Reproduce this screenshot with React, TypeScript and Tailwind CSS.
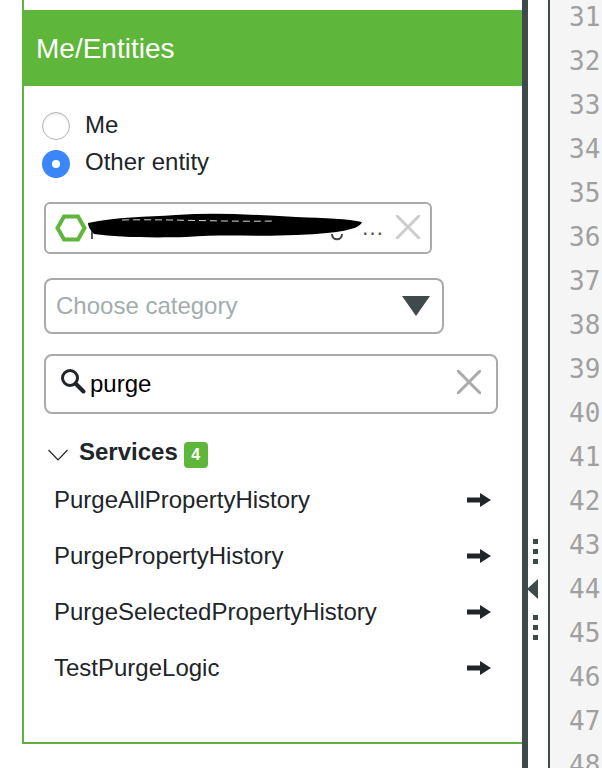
import React from "react";

const lines = [31,32,33,34,35,36,37,38,39,40,41,42,43,44,45,46,47,48];
const services = ["PurgeAllPropertyHistory","PurgePropertyHistory","PurgeSelectedPropertyHistory","TestPurgeLogic"];

function X({ size, color, w }: { size: number; color: string; w: number }) {
  return (
    <svg width={size} height={size} viewBox="0 0 24 24" className="shrink-0">
      <path d="M1 1L23 23M23 1L1 23" stroke={color} strokeWidth={w} fill="none" strokeLinecap="round" />
    </svg>
  );
}

function Arrow() {
  return (
    <svg width="24" height="14" viewBox="0 0 24 14" className="shrink-0">
      <path d="M0 4.5H13V0L24 7L13 14V9.5H0Z" fill="#212529" />
    </svg>
  );
}

function Dots() {
  return (
    <div className="flex flex-col gap-[5px]">
      <div className="w-[5px] h-[5px] bg-[#3f4a4b]" />
      <div className="w-[5px] h-[5px] bg-[#3f4a4b]" />
      <div className="w-[5px] h-[5px] bg-[#3f4a4b]" />
    </div>
  );
}

export default function App() {
  return (
    <div className="w-[602px] h-[768px] overflow-hidden bg-white flex font-['Liberation_Sans',Arial,sans-serif] text-[#212529]">
      <div className="w-[22px] shrink-0" />
      <div className="w-[500px] shrink-0 h-[744px] border-l-2 border-b-2 border-[#5fb040] flex flex-col">
        <div className="h-[10px]" />
        <div className="-ml-[2px] h-[76px] bg-[#5eb63b] text-white text-[28px] flex items-center pl-[14px] pt-[1px]">
          Me/Entities
        </div>
        <div className="pl-[18px] pt-[26px] flex flex-col">
          <div className="flex items-center h-[28px] gap-[15px] text-[24px]">
            <div className="w-[28px] h-[28px] rounded-full bg-white border border-[#b4b4b4] shadow-[inset_0_1px_2px_rgba(0,0,0,0.1)]" />
            <span className="-mt-[3px]">Me</span>
          </div>
          <div className="flex items-center h-[28px] gap-[15px] text-[24px] mt-[10px]">
            <div className="w-[28px] h-[28px] rounded-full bg-[#3b87f7] flex items-center justify-center">
              <div className="w-[8px] h-[8px] rounded-full bg-white" />
            </div>
            <span className="-mt-[5px]">Other entity</span>
          </div>

          <div className="relative ml-[2px] mt-[24px] w-[388px] h-[52px] border-2 border-[#aaaaaa] rounded-[6px] flex items-center pl-[9px] pr-[10px]">
            <svg width="32" height="28" viewBox="0 0 32 28" className="shrink-0 -mt-[1px]">
              <path d="M9 2.5H23L29.5 14L23 25.5H9L2.5 14Z" fill="none" stroke="#5eb63b" strokeWidth="4" />
            </svg>
            <span className="flex-1 text-right text-[23px] text-[#555] pr-[11px] -mt-[2px] tracking-[1px]">…</span>
            <div className="-mt-[2px]"><X size={24} color="#cccccc" w={3} /></div>
            <svg width="278" height="32" viewBox="0 0 278 32" className="absolute left-[40px] top-[8px]">
              <path d="M6 27V19" stroke="#555" strokeWidth="2" fill="none" />
              <path d="M246 22C246 29 256 29 256 22" stroke="#444" strokeWidth="2" fill="none" />
              <path d="M2 11C30 5 60 5 90 3C130 0 170 3 210 5C240 6 262 7 276 10C274 19 240 22 210 23C170 25 140 22 100 25C60 26 30 25 8 22C4 18 2 14 2 11Z" fill="#000000" />
              <path d="M36 8C90 7 130 10 190 9" stroke="#d8d8d8" strokeWidth="1" strokeDasharray="7 4" fill="none" />
            </svg>
          </div>

          <div className="ml-[2px] mt-[24px] w-[400px] h-[56px] border-2 border-[#aaaaaa] rounded-[8px] flex items-center justify-between pl-[10px] pr-[12px]">
            <span className="text-[24px] text-[#a2adad]">Choose category</span>
            <svg width="28" height="20" viewBox="0 0 28 20" className="shrink-0 -mt-[1px]">
              <path d="M0 0H28L14 20Z" fill="#3f4a4b" />
            </svg>
          </div>

          <div className="ml-[2px] mt-[20px] w-[454px] h-[60px] border-2 border-[#aaaaaa] rounded-[8px] flex items-center pl-[14px] pr-[15px]">
            <svg width="26" height="26" viewBox="0 0 26 26" className="shrink-0 -mt-[6px]">
              <circle cx="10" cy="10" r="7.5" fill="none" stroke="#212529" strokeWidth="3" />
              <path d="M15.5 15.5L23.5 23.5" stroke="#212529" strokeWidth="4" strokeLinecap="round" />
            </svg>
            <span className="flex-1 text-[24px] text-black ml-[4px]">purge</span>
            <div className="-mt-[4px]"><X size={24} color="#aaaaaa" w={3} /></div>
          </div>

          <div className="flex items-center h-[26px] mt-[28px] ml-[6px]">
            <svg width="20" height="12" viewBox="0 0 20 12" className="shrink-0">
              <path d="M0.5 1L10 11L19.5 1" fill="none" stroke="#212529" strokeWidth="1.2" />
            </svg>
            <span className="ml-[11px] font-bold text-[24px] -mt-[6px]">Services</span>
            <span className="ml-[6px] w-[24px] h-[26px] rounded-[4px] bg-[#5eb63b] text-white font-bold text-[16px] flex items-center justify-center">4</span>
          </div>

          <div className="flex flex-col mt-[4px] ml-[12px] w-[437px]">
            {services.map((s) => (
              <div key={s} className="h-[56px] flex items-center justify-between text-[24px]">
                <span>{s}</span>
                <Arrow />
              </div>
            ))}
          </div>
        </div>
      </div>

      <div className="w-[6px] shrink-0 bg-[#3f4a4b]" />
      <div className="w-[20px] shrink-0 flex flex-col items-start pt-[539px] pl-[5px]">
        <Dots />
        <svg width="11" height="20" viewBox="0 0 11 20" className="mt-[15px] -ml-[6px] shrink-0">
          <path d="M0 10L11 0V20Z" fill="#3f4a4b" />
        </svg>
        <div className="mt-[16px]"><Dots /></div>
      </div>
      <div className="w-[2px] shrink-0 bg-[#3f4a4b]" />
      <div className="flex-1 bg-[#f5f5f5] flex flex-col -mt-[5px] pl-[19px] font-['DejaVu_Sans_Mono',monospace] text-[26px] text-[#a0a0a0] overflow-hidden">
        {lines.map((n) => (
          <div key={n} className="h-[44px] shrink-0 leading-[44px]">{n}</div>
        ))}
      </div>
    </div>
  );
}
